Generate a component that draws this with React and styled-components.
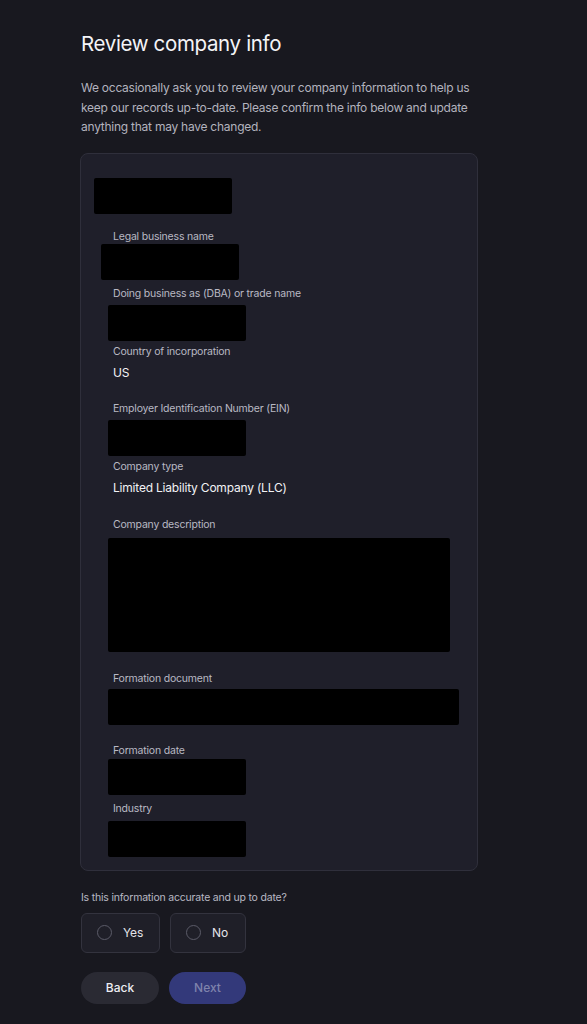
import React from 'react';
import styled, { createGlobalStyle } from 'styled-components';

const GlobalStyle = createGlobalStyle`
  html, body {
    margin: 0;
    padding: 0;
    background: #18181f;
  }
  body {
    font-family: Inter, "Liberation Sans", sans-serif;
    color: #ececf1;
    -webkit-font-smoothing: antialiased;
  }
`;

const Page = styled.div`
  width: 398px;
  padding: 30px 0 20px 81px;
  box-sizing: content-box;
`;

const Title = styled.h1`
  margin: 0;
  font-size: 20.5px;
  line-height: 28px;
  font-weight: 400;
  color: #f4f4f7;
  letter-spacing: -0.35px;
`;

const Intro = styled.p`
  margin: 20px 0 0 0;
  width: 398px;
  font-size: 12px;
  line-height: 19.5px;
  letter-spacing: -0.25px;
  color: #b3b3be;
`;

const Card = styled.section`
  margin-top: 16px;
  margin-left: -1px;
  width: 398px;
  box-sizing: border-box;
  padding: 24px 0 13px 0;
  background: #1f1f2a;
  border: 1px solid #2f2f3b;
  border-radius: 8px;
  display: flex;
  flex-direction: column;
`;

const Redacted = styled.div`
  width: ${(p) => p.w}px;
  height: ${(p) => p.h || 36}px;
  margin-left: ${(p) => p.x}px;
  background: #000;
  border-radius: 2px;
`;

const Field = styled.div`
  display: flex;
  flex-direction: column;
  margin-top: ${(p) => p.top}px;
  gap: ${(p) => p.gap}px;
`;

const Label = styled.span`
  margin-left: 32px;
  font-size: 10.5px;
  line-height: 14px;
  letter-spacing: -0.2px;
  color: #b9b9c4;
`;

const Value = styled.span`
  margin-left: 32px;
  font-size: 12px;
  line-height: 18px;
  letter-spacing: -0.2px;
  color: #f2f2f5;
`;

const Question = styled.div`
  margin-top: 20px;
  font-size: 10.5px;
  line-height: 14px;
  letter-spacing: -0.2px;
  color: #b9b9c4;
`;

const Choices = styled.div`
  display: flex;
  gap: 10px;
  margin-top: 8px;
`;

const Choice = styled.label`
  display: flex;
  align-items: center;
  gap: 11px;
  width: ${(p) => p.w}px;
  height: 40px;
  box-sizing: border-box;
  padding-left: 15px;
  background: #1f1f28;
  border: 1px solid #33333e;
  border-radius: 6px;
  font-size: 12px;
  letter-spacing: -0.1px;
  color: #e4e4ea;
  cursor: pointer;
`;

const Radio = styled.span`
  width: 13px;
  height: 13px;
  border-radius: 50%;
  border: 1px solid #5b5b68;
  flex-shrink: 0;
`;

const Actions = styled.div`
  display: flex;
  gap: 10px;
  margin-top: 19px;
`;

const Button = styled.button`
  width: ${(p) => p.w}px;
  height: 32px;
  border: none;
  border-radius: 16px;
  font-family: inherit;
  font-size: 12px;
  font-weight: 500;
  background: ${(p) => (p.primary ? '#33397a' : '#2a2a33')};
  color: ${(p) => (p.primary ? '#7f83ac' : '#ededf2')};
  cursor: pointer;
`;

const fields = [
  { label: 'Legal business name', top: 16, gap: 0, box: { x: 20, w: 138 } },
  { label: 'Doing business as (DBA) or trade name', top: 7, gap: 4, box: { x: 27, w: 138 } },
  { label: 'Country of incorporation', top: 4, gap: 5, value: 'US' },
  { label: 'Employer Identification Number (EIN)', top: 20, gap: 4, box: { x: 27, w: 138 } },
  { label: 'Company type', top: 4, gap: 5, value: 'Limited Liability Company (LLC)' },
  { label: 'Company description', top: 21, gap: 6, box: { x: 27, w: 342, h: 114 } },
  { label: 'Formation document', top: 20, gap: 3, box: { x: 27, w: 351 } },
  { label: 'Formation date', top: 19, gap: 1, box: { x: 27, w: 138 } },
  { label: 'Industry', top: 7, gap: 5, box: { x: 27, w: 138 } },
];

export default function App() {
  return (
    <>
      <GlobalStyle />
      <Page>
        <Title>Review company info</Title>
        <Intro>
          We occasionally ask you to review your company information to help us
          keep our records up-to-date. Please confirm the info below and update
          anything that may have changed.
        </Intro>
        <Card>
          <Redacted x={13} w={138} />
          {fields.map((f) => (
            <Field key={f.label} top={f.top} gap={f.gap}>
              <Label>{f.label}</Label>
              {f.value ? (
                <Value>{f.value}</Value>
              ) : (
                <Redacted x={f.box.x} w={f.box.w} h={f.box.h} />
              )}
            </Field>
          ))}
        </Card>
        <Question>Is this information accurate and up to date?</Question>
        <Choices>
          <Choice w={79}>
            <Radio />
            Yes
          </Choice>
          <Choice w={76}>
            <Radio />
            No
          </Choice>
        </Choices>
        <Actions>
          <Button w={78}>Back</Button>
          <Button w={77} primary>
            Next
          </Button>
        </Actions>
      </Page>
    </>
  );
}
